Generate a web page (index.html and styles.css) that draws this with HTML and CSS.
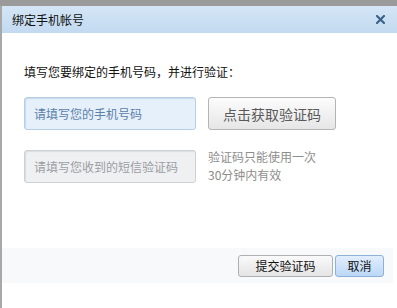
FILE: index.html
```html
<!DOCTYPE html>
<html lang="zh-CN">
  <head>
    <meta charset="UTF-8" />
    <title>绑定手机帐号</title>
    <link rel="stylesheet" href="styles.css">
  </head>
  <body>
    <div class="topbar"></div>
    <div class="page">
      <div class="edge"></div>
      <!-- Dialog -->
      <div class="dialog">
        <div class="dialog-head">
          <span class="dialog-title">绑定手机帐号</span>
          <span class="close-btn">
            <svg width="9" height="9" viewBox="0 0 9 9">
              <path d="M1 1 L8 8 M8 1 L1 8" stroke="#3b6389" stroke-width="2.2" stroke-linecap="square" />
            </svg>
          </span>
        </div>
        <div class="dialog-body">
          <p class="intro">填写您要绑定的手机号码，并进行验证：</p>
          <div class="row">
            <input class="field field-phone" type="text" placeholder="请填写您的手机号码" />
            <button class="get-code">点击获取验证码</button>
          </div>
          <div class="row">
            <input class="field field-code" type="text" placeholder="请填写您收到的短信验证码" />
            <div class="hint">
              <div>验证码只能使用一次</div>
              <div><b>30</b>分钟内有效</div>
            </div>
          </div>
        </div>
        <div class="dialog-foot">
          <button class="btn">提交验证码</button>
          <button class="btn btn-blue">取消</button>
        </div>
      </div>
    </div>
  </body>
</html>
```

FILE: styles.css
```css
/* Base */
* {
  margin: 0;
  padding: 0;
  box-sizing: border-box;
  font-family: "Noto Sans CJK SC", "Liberation Sans", sans-serif;
}

body {
  background: #fff;
  width: 397px;
  height: 308px;
  overflow: hidden;
}

.topbar {
  height: 6px;
  background: #9a9a9a;
}

.page {
  display: flex;
  height: 302px;
}

.edge {
  width: 2px;
  background: #a8a8a8;
}

/* Dialog */
.dialog {
  flex: 1;
  display: flex;
  flex-direction: column;
}

.dialog-head {
  height: 27px;
  display: flex;
  align-items: center;
  justify-content: space-between;
  padding: 0 12px 0 10px;
  background: linear-gradient(#d4e6f6, #c2d9f0);
}

.dialog-title {
  font-size: 12px;
  color: #111;
  line-height: 14px;
}

.close-btn {
  display: flex;
  width: 9px;
  height: 9px;
}

.dialog-body {
  padding: 32px 0 0 22px;
  height: 215px;
}

.intro {
  font-size: 12px;
  line-height: 14px;
  color: #111;
  margin-bottom: 18px;
}

.row {
  display: flex;
  align-items: flex-start;
  gap: 12px;
  margin-bottom: 20px;
}

.field {
  width: 172px;
  height: 33px;
  border-radius: 3px;
  padding: 0 9px;
  font-size: 12px;
  outline: none;
}

.field-phone {
  background: #e6f0fa;
  border: 1px solid #b7cde4;
  box-shadow: inset 1px 1px 1px rgba(120, 150, 190, 0.25);
}

.field-phone::placeholder {
  color: #5b80aa;
}

.field-code {
  background: #eff0f2;
  border: 1px solid #cdd0d4;
  box-shadow: inset 1px 1px 1px rgba(0, 0, 0, 0.08);
}

.field-code::placeholder {
  color: #9a9ea3;
}

.get-code {
  width: 128px;
  height: 33px;
  border: 1px solid #b4b4b4;
  border-radius: 3px;
  background: linear-gradient(#fcfcfc, #e6e6e6);
  font-size: 14px;
  color: #5a5a5a;
}

.hint {
  font-size: 12px;
  line-height: 18px;
  color: #8e8e8e;
  margin-top: -2px;
}

.hint b {
  font-weight: normal;
  color: #8a8a8a;
}

/* Footer */
.dialog-foot {
  height: 35px;
  margin-right: 4px;
  background: #f7f9fb;
  display: flex;
  align-items: center;
  justify-content: flex-end;
  gap: 2px;
  padding-right: 9px;
}

.btn {
  height: 22px;
  width: 95px;
  border: 1px solid #b0b0b0;
  border-radius: 3px;
  background: linear-gradient(#fafafa, #e4e4e4);
  font-size: 12px;
  color: #111;
}

.btn-blue {
  width: 49px;
  border-color: #8eb1d8;
  background: linear-gradient(#e2eefc, #bcd7f7);
}
```
